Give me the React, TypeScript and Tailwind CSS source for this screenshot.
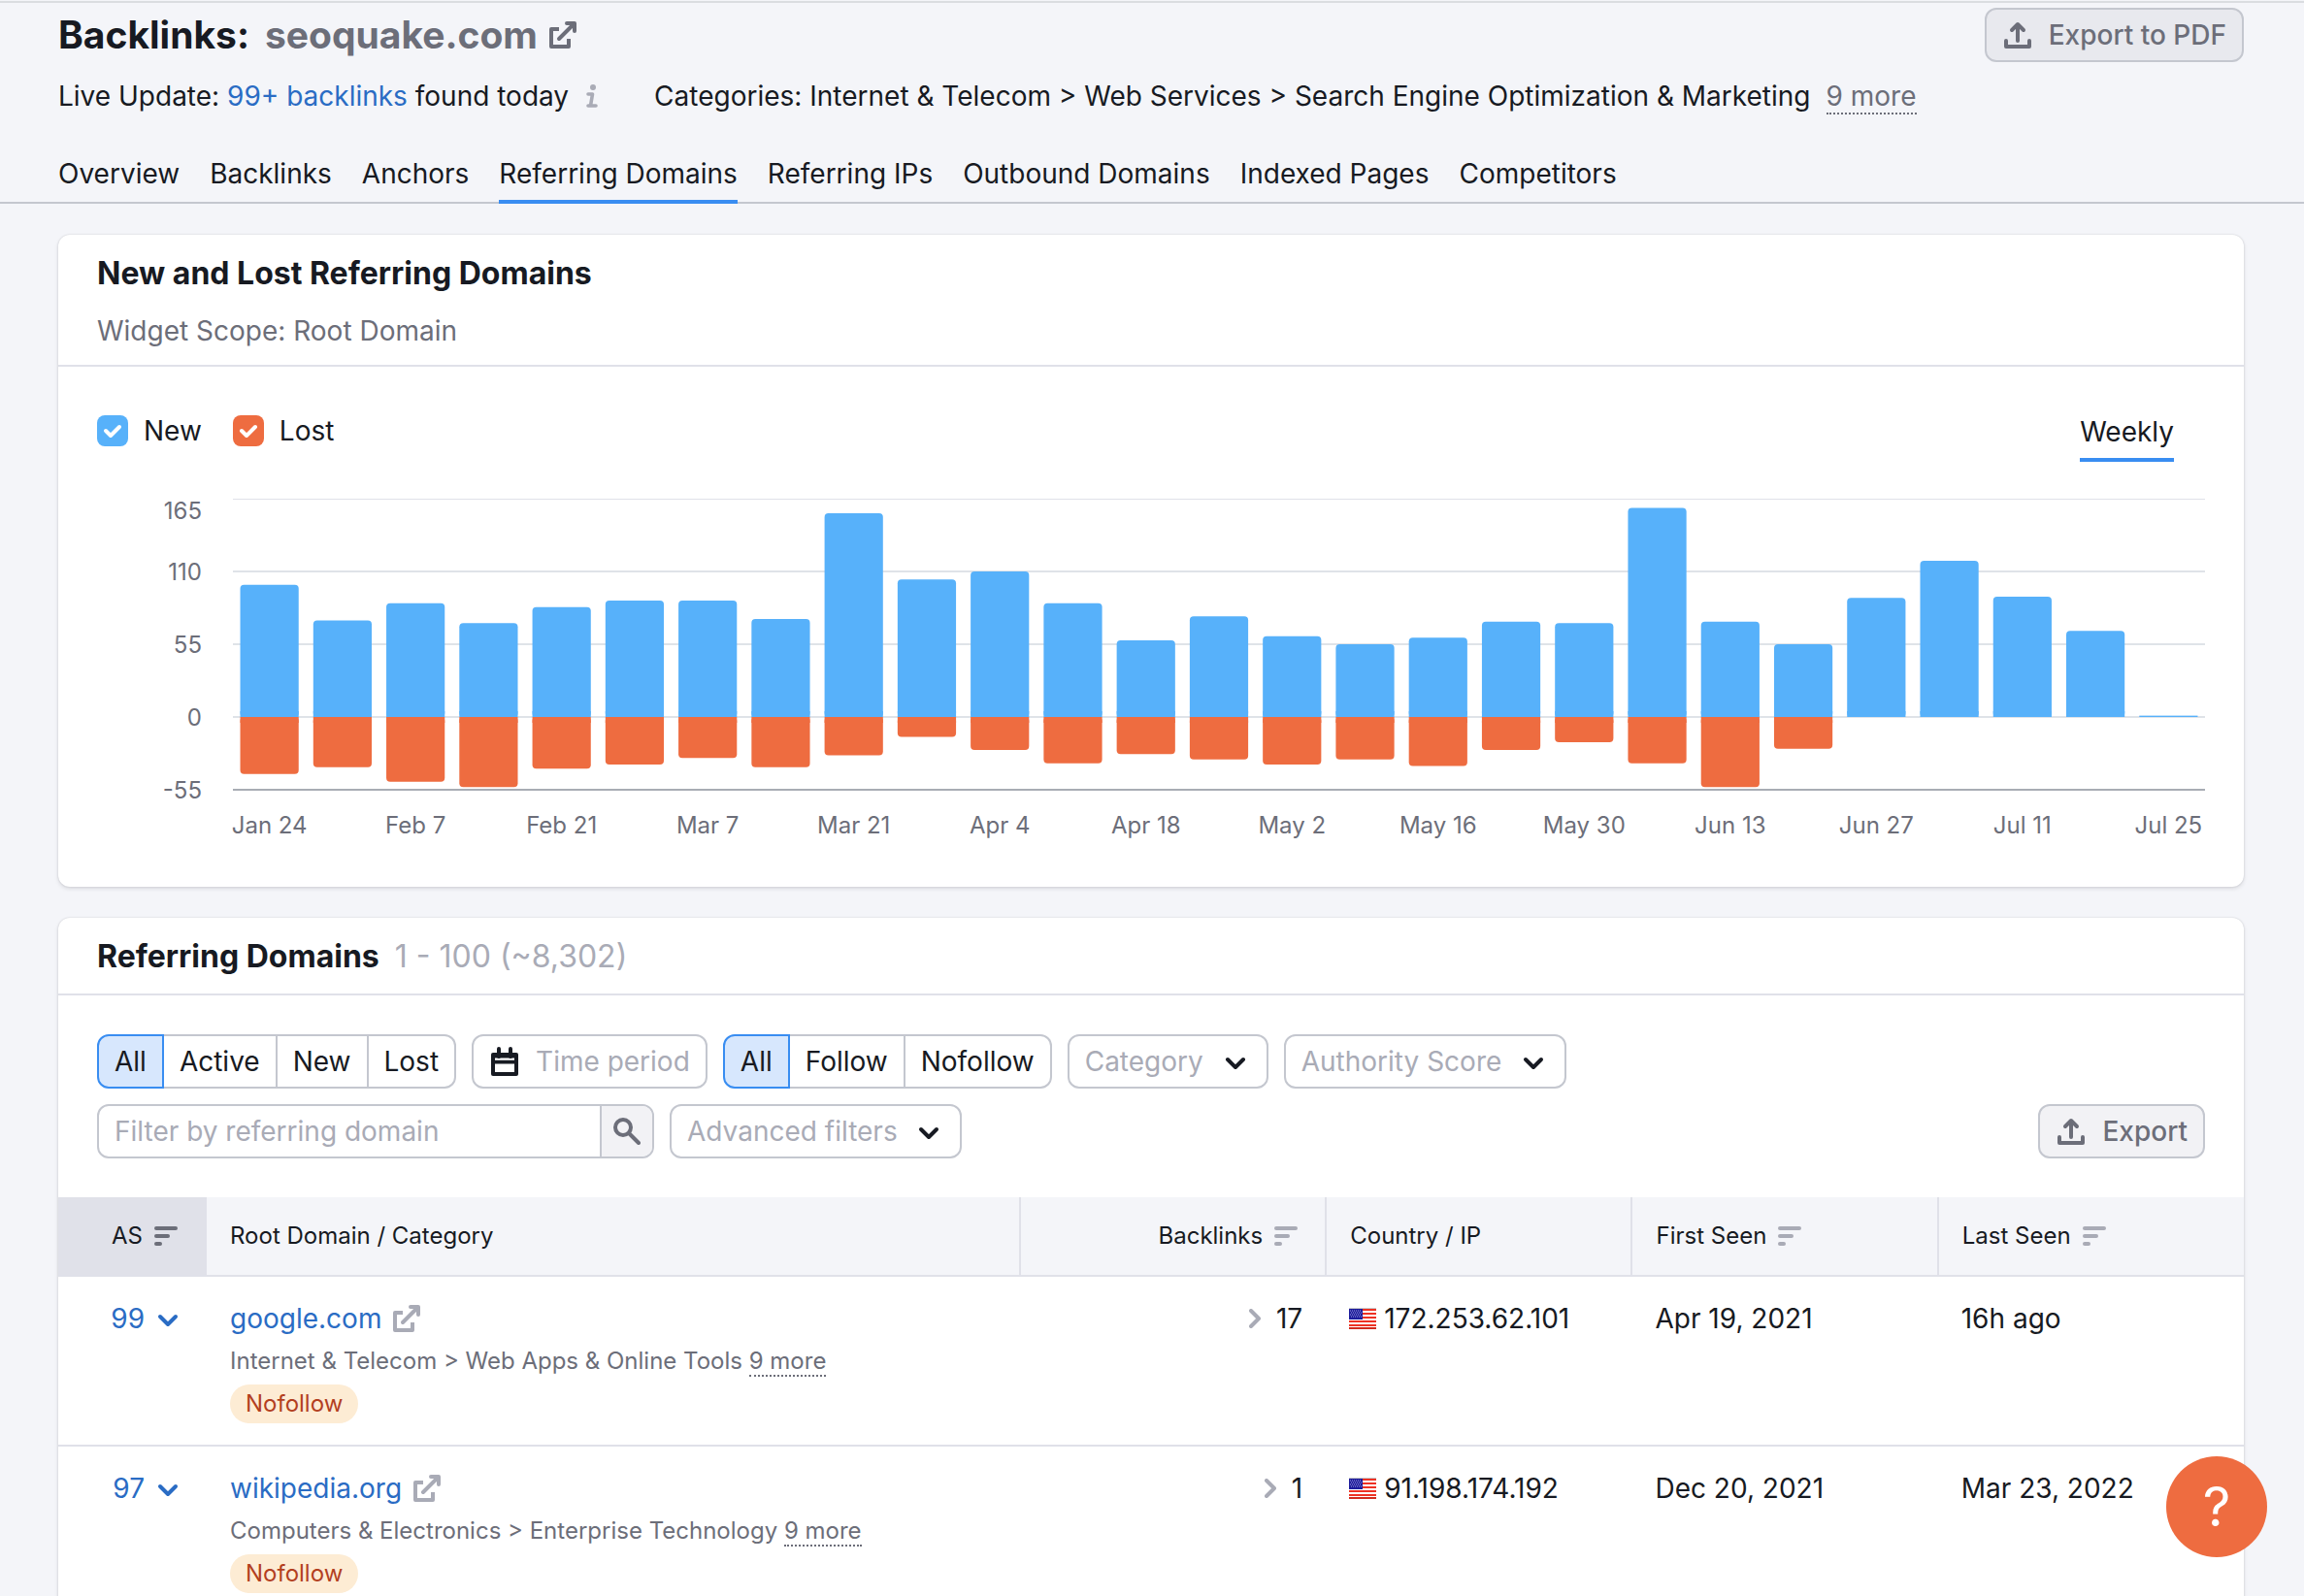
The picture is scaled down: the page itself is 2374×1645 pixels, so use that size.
import type { ReactNode } from "react";

const TABS = [
  "Overview",
  "Backlinks",
  "Anchors",
  "Referring Domains",
  "Referring IPs",
  "Outbound Domains",
  "Indexed Pages",
  "Competitors",
];

const WEEKS = [
  { label: "Jan 24", added: 100, lost: 43 },
  { label: "", added: 73, lost: 38 },
  { label: "Feb 7", added: 86, lost: 49 },
  { label: "", added: 71, lost: 53 },
  { label: "Feb 21", added: 83, lost: 39 },
  { label: "", added: 88, lost: 36 },
  { label: "Mar 7", added: 88, lost: 31 },
  { label: "", added: 74, lost: 38 },
  { label: "Mar 21", added: 154, lost: 29 },
  { label: "", added: 104, lost: 15 },
  { label: "Apr 4", added: 110, lost: 25 },
  { label: "", added: 86, lost: 35 },
  { label: "Apr 18", added: 58, lost: 28 },
  { label: "", added: 76, lost: 32 },
  { label: "May 2", added: 61, lost: 36 },
  { label: "", added: 55, lost: 32 },
  { label: "May 16", added: 60, lost: 37 },
  { label: "", added: 72, lost: 25 },
  { label: "May 30", added: 71, lost: 19 },
  { label: "", added: 158, lost: 35 },
  { label: "Jun 13", added: 72, lost: 53 },
  { label: "", added: 55, lost: 24 },
  { label: "Jun 27", added: 90, lost: 0 },
  { label: "", added: 118, lost: 0 },
  { label: "Jul 11", added: 91, lost: 0 },
  { label: "", added: 65, lost: 0 },
  { label: "Jul 25", added: 1, lost: 0 },
];

const ROWS = [
  {
    score: 99,
    domain: "google.com",
    category: "Internet & Telecom > Web Apps & Online Tools",
    backlinks: 17,
    ip: "172.253.62.101",
    first: "Apr 19, 2021",
    last: "16h ago",
  },
  {
    score: 97,
    domain: "wikipedia.org",
    category: "Computers & Electronics > Enterprise Technology",
    backlinks: 1,
    ip: "91.198.174.192",
    first: "Dec 20, 2021",
    last: "Mar 23, 2022",
  },
];

function ExternalIcon({ className }: { className: string }) {
  return (
    <svg viewBox="0 0 28 28" className={`w-7 h-7 shrink-0 ${className}`} fill="none" stroke="currentColor" strokeWidth="4" strokeLinejoin="round" aria-hidden="true">
      <path d="M10 8H2v18h18v-8" />
      <path d="M10 18 25 3" strokeLinecap="round" />
      <path d="M18 2h8v8" strokeLinecap="round" />
    </svg>
  );
}

function UploadIcon() {
  return (
    <svg viewBox="-2 -2 32 32" className="w-8 h-8 shrink-0" fill="none" stroke="currentColor" strokeWidth="4" strokeLinejoin="round" strokeLinecap="round" aria-hidden="true">
      <path d="M2 20v6h24v-6" />
      <path d="M14 4v16M8 9l6-6 6 6" />
    </svg>
  );
}

function ChevronDown({ className }: { className: string }) {
  return (
    <svg viewBox="0 0 32 32" className={`w-8 h-8 shrink-0 ${className}`} fill="none" stroke="currentColor" strokeWidth="4" strokeLinejoin="round" strokeLinecap="round" aria-hidden="true">
      <path d="m8 14 8 8 8-8" />
    </svg>
  );
}

function SortIcon({ className }: { className: string }) {
  return (
    <svg viewBox="0 0 32 32" className={`w-8 h-8 shrink-0 ${className}`} fill="currentColor" aria-hidden="true">
      <rect x="4" y="6" width="24" height="4" rx="2" />
      <rect x="4" y="14" width="16" height="4" rx="2" />
      <rect x="4" y="22" width="8" height="4" rx="2" />
    </svg>
  );
}

function CalendarIcon() {
  return (
    <svg viewBox="-2 -1 32 32" className="w-8 h-8 shrink-0 text-[#171a22]" fill="currentColor" aria-hidden="true">
      <rect x="0" y="6" width="28" height="24" rx="2" />
      <path d="M4 11.5h20v2.3H4zM4 17.5h20v8.5H4z" fill="#fff" />
      <path d="M8 2v8M20 2v8" stroke="currentColor" strokeWidth="4" strokeLinecap="round" />
    </svg>
  );
}

function UsFlag() {
  return (
    <svg viewBox="0 0 28 22" className="w-7 h-[22px] shrink-0" role="img" aria-label="United States">
      <rect width="28" height="22" fill="#fff" />
      <path d="M0 2h28M0 6h28M0 10h28M0 14h28M0 18h28" stroke="#ee3224" strokeWidth="2" />
      <path d="M0 .5h28" stroke="#c9c9cc" />
      <path d="M0 21h28" stroke="#d22b1d" strokeWidth="2" />
      <rect y="1" width="14" height="11" fill="#1d1c9c" />
      <path d="M1 3h12M2 5h12M1 7h12M2 9h12" stroke="#a3a3dd" strokeDasharray="1 1" />
    </svg>
  );
}

function Segmented({ label, items }: { label: string; items: string[] }) {
  return (
    <div role="group" aria-label={label} className="flex h-14">
      {items.map((item, i) => (
        <button
          key={item}
          type="button"
          aria-pressed={i === 0}
          className={
            i === 0
              ? "px-4 border-2 border-[#398df1] bg-[#d7e7fd] rounded-l-xl"
              : "px-4 border-2 border-l-0 border-[#c4c7cf] bg-white last:rounded-r-xl"
          }
        >
          {item}
        </button>
      ))}
    </div>
  );
}

function FilterSelect({ label }: { label: string }) {
  return (
    <div className="relative h-14">
      <select
        aria-label={label}
        className="appearance-none h-full pl-4 pr-16 border-2 border-[#c4c7cf] rounded-xl bg-white text-[#a9abb6]"
      >
        <option>{label}</option>
      </select>
      <span className="absolute right-[18px] top-3 pointer-events-none">
        <ChevronDown className="text-[#171a22]" />
      </span>
    </div>
  );
}

function LegendCheckbox({ label, className }: { label: string; className: string }) {
  return (
    <label className="flex items-center gap-4 h-8">
      <span className="relative w-8 h-8">
        <input type="checkbox" defaultChecked className={`appearance-none block w-8 h-8 rounded-lg ${className}`} />
        <svg viewBox="0 0 32 32" className="absolute inset-0 w-8 h-8 pointer-events-none" fill="none" stroke="#fff" strokeWidth="4" strokeLinecap="round" strokeLinejoin="round" aria-hidden="true">
          <path d="m9 16 5 5 9-9" />
        </svg>
      </span>
      {label}
    </label>
  );
}

function DomainsChart() {
  const band = 100 / WEEKS.length;
  const unit = 75 / 55;
  const zero = 225;

  return (
    <svg className="block w-full h-[360px] overflow-visible text-2xl" fill="#6c6e79" role="img" aria-label="New and lost referring domains by week">
      <line x1="0" x2="100%" y1="0.5" y2="0.5" stroke="#e0e1e9" />
      {[75, 150, 225].map((y) => (
        <line key={y} x1="0" x2="100%" y1={y} y2={y} stroke="#dfe3e8" strokeWidth="2" />
      ))}
      <text x="-32" y="21" textAnchor="end">165</text>
      <text x="-32" y="84" textAnchor="end">110</text>
      <text x="-32" y="159" textAnchor="end">55</text>
      <text x="-32" y="234" textAnchor="end">0</text>
      <text x="-32" y="309" textAnchor="end">-55</text>
      {WEEKS.map((week, i) => {
        const x = `${band * (i + 0.1)}%`;
        const width = `${band * 0.8}%`;
        const up = week.added * unit;
        const down = week.lost * unit;
        return (
          <g key={i}>
            <rect x={x} width={width} y={zero - up} height={up} rx={up > 4 ? 4 : 0} fill="#57b1fa" />
            {up > 4 && <rect x={x} width={width} y={zero - 6} height="6" fill="#57b1fa" />}
            {down > 0 && (
              <>
                <rect x={x} width={width} y={zero} height={down} rx="4" fill="#ee6c40" />
                <rect x={x} width={width} y={zero} height="6" fill="#ee6c40" />
              </>
            )}
            {week.label && (
              <text x={`${band * (i + 0.5)}%`} y="345" textAnchor="middle">
                {week.label}
              </text>
            )}
          </g>
        );
      })}
      <line x1="0" x2="100%" y1="300" y2="300" stroke="#a8adb4" strokeWidth="2" />
    </svg>
  );
}

function Card({ children }: { children: ReactNode }) {
  return (
    <section className="bg-white rounded-xl overflow-hidden shadow-[0_0_2px_rgba(25,27,35,0.16),0_2px_4px_rgba(25,27,35,0.12)]">
      {children}
    </section>
  );
}

export default function App() {
  return (
    <div className="h-screen overflow-hidden bg-[#f4f5f9] pt-px font-['Inter',sans-serif] text-[28px] leading-[42px] text-[#171a22]">
      <header className="border-t-2 border-[#dadde0]">
        <div className="pl-[60px] pr-[62px] pt-[5px] flex items-center justify-between">
          <h1 className="flex items-center gap-4 text-[39px] font-bold">
            Backlinks:
            <a href="#site" className="flex items-center gap-3 text-[#6c6e79]">
              seoquake.com
              <ExternalIcon className="" />
            </a>
          </h1>
          <button
            type="button"
            className="flex items-center gap-4 h-14 px-4 border-2 border-[#c4c7cf] rounded-xl bg-[#e8e9ee] text-[#6c6e79] font-medium"
          >
            <UploadIcon />
            Export to PDF
          </button>
        </div>
        <div className="px-[60px] mt-[14px] flex items-center">
          <p>
            Live Update: <a href="#live" className="text-[#2a6cc4]">99+ backlinks</a> found today
          </p>
          <svg viewBox="0 0 12 24" className="w-3 h-6 ml-[18px] mr-[58px] text-[#a9abb6]" fill="none" stroke="currentColor" strokeWidth="3.6" strokeLinecap="round" strokeLinejoin="round" aria-hidden="true">
            <circle cx="7" cy="3" r="3" fill="currentColor" stroke="none" />
            <path d="M2 10h4.500L4.500 22M2 22h8" />
          </svg>
          <p>
            Categories: Internet &amp; Telecom &gt; Web Services &gt; Search Engine Optimization &amp; Marketing
          </p>
          <a href="#categories" className="ml-4 text-[#6c6e79]">
            <span className="border-b-2 border-dotted border-[#6c6e79]">9 more</span>
          </a>
        </div>
        <nav className="px-[60px] mt-8 flex gap-[31px] border-b-2 border-[#c4c7cf]">
          {TABS.map((tab) => (
            <a
              key={tab}
              href="#tab"
              className={
                tab === "Referring Domains"
                  ? "-mb-[2px] leading-[54px] border-b-4 border-[#398df1]"
                  : "-mb-[2px] leading-[54px] border-b-4 border-transparent"
              }
            >
              {tab}
            </a>
          ))}
        </nav>
      </header>

      <main className="pl-[60px] pr-[62px] pt-8 flex flex-col gap-8">
        <Card>
          <div className="px-10 pt-5 pb-[14px] border-b-2 border-[#e0e1e9]">
            <h2 className="text-[32px] leading-10 font-bold">New and Lost Referring Domains</h2>
            <p className="mt-[18px] text-[#6c6e79]">Widget Scope: Root Domain</p>
          </div>
          <div className="px-10 pt-[50px] pb-10">
            <div className="flex items-start gap-8">
              <LegendCheckbox label="New" className="bg-[#57b1fa]" />
              <LegendCheckbox label="Lost" className="bg-[#ee6c40]" />
              <button type="button" className="ml-auto mr-8 pb-[10px] leading-[34px] border-b-4 border-[#398df1]">
                Weekly
              </button>
            </div>
            <div className="mt-[38px] pl-[140px]">
              <DomainsChart />
            </div>
          </div>
        </Card>

        <Card>
          <div className="px-10 pt-5 pb-[18px] flex items-center gap-4 border-b-2 border-[#e0e1e9] text-[32px] leading-10">
            <h2 className="font-bold">Referring Domains</h2>
            <span className="text-[#a9abb6]">1 - 100 (~8,302)</span>
          </div>

          <div className="px-10 py-10 flex flex-col gap-4">
            <div className="flex gap-4">
              <Segmented label="Status" items={["All", "Active", "New", "Lost"]} />
              <button
                type="button"
                className="flex items-center gap-4 h-14 px-4 border-2 border-[#c4c7cf] rounded-xl text-[#a9abb6]"
              >
                <CalendarIcon />
                Time period
              </button>
              <Segmented label="Link type" items={["All", "Follow", "Nofollow"]} />
              <FilterSelect label="Category" />
              <FilterSelect label="Authority Score" />
            </div>
            <div className="flex gap-4">
              <form className="flex h-14 w-[574px] border-2 border-[#c4c7cf] rounded-xl overflow-hidden">
                <input
                  type="text"
                  aria-label="Filter by referring domain"
                  placeholder="Filter by referring domain"
                  className="flex-1 min-w-0 px-4 placeholder:text-[#a9abb6]"
                />
                <button
                  type="button"
                  aria-label="Search"
                  className="w-[54px] flex items-center justify-center border-l-2 border-[#c4c7cf] bg-[#f2f2f5] text-[#6c6e79]"
                >
                  <svg viewBox="0 0 28 28" className="w-7 h-7" fill="none" stroke="currentColor" strokeWidth="4" strokeLinecap="round" aria-hidden="true">
                    <circle cx="10" cy="10" r="8" />
                    <path d="m16.500 16.500 9.500 9.500" />
                  </svg>
                </button>
              </form>
              <FilterSelect label="Advanced filters" />
              <button
                type="button"
                className="ml-auto flex items-center gap-4 h-14 px-4 border-2 border-[#c4c7cf] rounded-xl bg-[#f2f2f5] text-[#6c6e79] font-medium"
              >
                <UploadIcon />
                Export
              </button>
            </div>
          </div>

          <table className="w-full table-fixed text-left">
            <colgroup>
              <col className="w-[153px]" />
              <col />
              <col className="w-[14%]" />
              <col className="w-[14%]" />
              <col className="w-[14%]" />
              <col className="w-[14%]" />
            </colgroup>
            <thead className="bg-[#f4f5f9] text-2xl">
              <tr className="h-[81px] border-b-2 border-[#e0e1e9]">
                <th className="pr-[26px] font-normal bg-[#e0e1e9]">
                  <span className="flex items-center justify-end gap-2">
                    AS
                    <SortIcon className="text-[#6c6e79]" />
                  </span>
                </th>
                <th className="px-6 font-normal">Root Domain / Category</th>
                <th className="px-6 font-normal border-l-2 border-[#e0e1e9]">
                  <span className="flex items-center justify-end gap-2">
                    Backlinks
                    <SortIcon className="text-[#a9abb6]" />
                  </span>
                </th>
                <th className="px-6 font-normal border-l-2 border-[#e0e1e9]">Country / IP</th>
                <th className="px-6 font-normal border-l-2 border-[#e0e1e9]">
                  <span className="flex items-center gap-2">
                    First Seen
                    <SortIcon className="text-[#a9abb6]" />
                  </span>
                </th>
                <th className="px-6 font-normal border-l-2 border-[#e0e1e9]">
                  <span className="flex items-center gap-2">
                    Last Seen
                    <SortIcon className="text-[#a9abb6]" />
                  </span>
                </th>
              </tr>
            </thead>
            <tbody>
              {ROWS.map((row) => (
                <tr key={row.domain} className="align-top border-b-2 border-[#e0e1e9]">
                  <td className="pt-[22px] pr-6">
                    <button type="button" className="ml-auto flex items-center gap-2 text-[#2a6cc4]">
                      {row.score}
                      <ChevronDown className="" />
                    </button>
                  </td>
                  <td className="px-6 py-[22px]">
                    <a href="#domain" className="flex items-center gap-3 w-fit text-[#2a6cc4]">
                      {row.domain}
                      <ExternalIcon className="text-[#a9abb6]" />
                    </a>
                    <p className="mt-1 text-2xl leading-[38px] text-[#6c6e79]">
                      {row.category}{" "}
                      <a href="#more" className="border-b-2 border-dotted border-[#6c6e79]">9 more</a>
                    </p>
                    <span className="mt-[5px] flex items-center w-fit h-10 px-4 rounded-full bg-[#fdecd4] text-2xl text-[#b33f1f]">
                      Nofollow
                    </span>
                  </td>
                  <td className="px-6 pt-[22px]">
                    <span className="flex items-center justify-end gap-4">
                      <svg viewBox="0 0 12 20" className="w-3 h-5 text-[#a9abb6]" fill="none" stroke="currentColor" strokeWidth="4" strokeLinejoin="round" strokeLinecap="round" aria-hidden="true">
                        <path d="m2 2 8 8-8 8" />
                      </svg>
                      {row.backlinks}
                    </span>
                  </td>
                  <td className="px-6 pt-[22px]">
                    <span className="flex items-center gap-2">
                      <UsFlag />
                      {row.ip}
                    </span>
                  </td>
                  <td className="px-6 pt-[22px]">{row.first}</td>
                  <td className="px-6 pt-[22px]">{row.last}</td>
                </tr>
              ))}
            </tbody>
          </table>
        </Card>
      </main>

      <button
        type="button"
        aria-label="Help"
        className="fixed right-[38px] bottom-10 w-[104px] h-[104px] rounded-full bg-[#ee6c40] text-white text-[56px] flex items-center justify-center"
      >
        ?
      </button>
    </div>
  );
}
